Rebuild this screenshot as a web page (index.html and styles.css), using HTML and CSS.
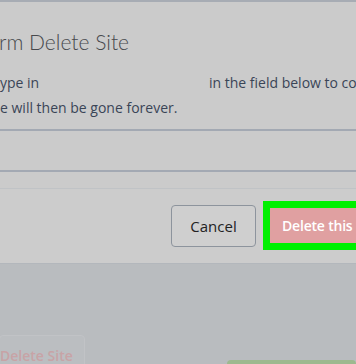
FILE: index.html
```html
<!DOCTYPE html>
<html lang="en">
<head>
    <meta charset="UTF-8">
    <meta name="viewport" content="width=device-width, initial-scale=1.0">
    <title>Confirm Delete Site</title>
    <link rel="stylesheet" href="styles.css">
</head>
<body>
    <div class="modal">
        <div class="modal-header">
            <h4 class="modal-title">rm Delete Site</h4>
        </div>
        <div class="modal-body">
            <p class="line">
                <span class="line-start">ype in</span>
                <span>in the field below to co</span>
            </p>
            <p class="line">e will then be gone forever.</p>
            <div class="field"></div>
        </div>
        <div class="modal-footer">
            <button class="btn btn-cancel">Cancel</button>
            <div class="highlight">
                <button class="btn btn-delete">Delete this</button>
            </div>
        </div>
    </div>
    <div class="page-actions">
        <button class="btn btn-ghost">Delete Site</button>
        <div class="btn-save"></div>
    </div>
</body>
</html>
```

FILE: styles.css
```css
body {
    margin: 0;
    height: 364px;
    overflow: hidden;
    background-color: #b9bcbf;
    font-family: "Open Sans", "Noto Sans", sans-serif;
}
.modal {
    background-color: #cbcbcb;
    border-top: 2px solid #a7acb4;
    border-bottom: 1px solid #b3b7bc;
}
.modal-header {
    padding-top: 25px;
}
.modal-title {
    margin: 0;
    margin-left: -1px;
    font-family: Lato, "Open Sans", sans-serif;
    font-size: 21px;
    font-weight: 300;
    line-height: 29px;
    color: #47494d;
    white-space: nowrap;
}
.modal-body {
    padding-top: 14px;
    padding-bottom: 16px;
}
.line {
    margin: 0;
    font-size: 14px;
    line-height: 25px;
    color: #3a4557;
    white-space: nowrap;
    display: flex;
}
.line-start {
    width: 209px;
    flex-shrink: 0;
}
.field {
    margin-top: 9px;
    height: 39px;
    border-top: 2px solid #a3a9b3;
    border-bottom: 2px solid #a3a9b3;
}
.modal-footer {
    display: flex;
    align-items: center;
    gap: 7px;
    padding: 12px 0 13px 171px;
    border-top: 1px solid #c0c3c6;
    background-color: #cccccc;
    white-space: nowrap;
}
.btn {
    font-family: inherit;
    font-size: 15px;
    border-radius: 4px;
    cursor: pointer;
}
.btn-cancel {
    flex-shrink: 0;
    width: 85px;
    height: 42px;
    border: 1.5px solid #8d949d;
    background-color: #cfcfcf;
    color: #222;
}
.highlight {
    flex: 1;
    min-width: 0;
    border: 7px solid #00f000;
    border-right: none;
}
.btn-delete {
    display: block;
    width: 100%;
    height: 35px;
    padding: 0 0 0 12px;
    text-align: left;
    border: none;
    border-radius: 0;
    background-color: #e0a0a1;
    color: #fff;
    font-size: 14px;
    font-weight: 600;
    letter-spacing: -0.2px;
}
.page-actions {
    display: flex;
    align-items: flex-start;
    padding-top: 71px;
}
.btn-ghost {
    flex-shrink: 0;
    width: 86px;
    height: 40px;
    margin-left: -1px;
    padding: 0;
    text-align: left;
    border: 1px solid #c1c3c6;
    background-color: #bbbec1;
    color: #c8a3a6;
    font-weight: 600;
    font-size: 14px;
    line-height: 37px;
}
.btn-save {
    flex: 1;
    margin-left: 142px;
    margin-top: 25px;
    height: 20px;
    border-radius: 4px;
    background-color: #9db98f;
}
```
